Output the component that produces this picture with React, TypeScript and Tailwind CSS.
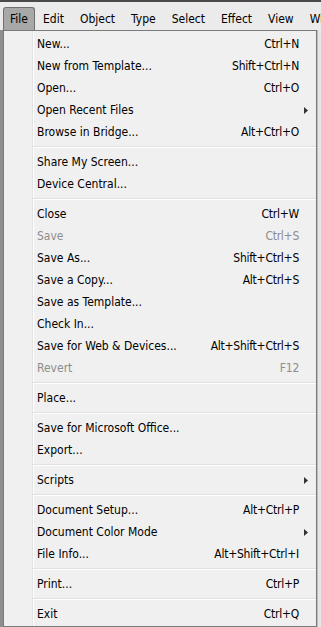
import React from "react";

type Item =
  | { kind: "item"; label: string; shortcut?: string; disabled?: boolean; submenu?: boolean }
  | { kind: "sep" };

const menuBar = ["File", "Edit", "Object", "Type", "Select", "Effect", "View", "Window"];

const items: Item[] = [
  { kind: "item", label: "New...", shortcut: "Ctrl+N" },
  { kind: "item", label: "New from Template...", shortcut: "Shift+Ctrl+N" },
  { kind: "item", label: "Open...", shortcut: "Ctrl+O" },
  { kind: "item", label: "Open Recent Files", submenu: true },
  { kind: "item", label: "Browse in Bridge...", shortcut: "Alt+Ctrl+O" },
  { kind: "sep" },
  { kind: "item", label: "Share My Screen..." },
  { kind: "item", label: "Device Central..." },
  { kind: "sep" },
  { kind: "item", label: "Close", shortcut: "Ctrl+W" },
  { kind: "item", label: "Save", shortcut: "Ctrl+S", disabled: true },
  { kind: "item", label: "Save As...", shortcut: "Shift+Ctrl+S" },
  { kind: "item", label: "Save a Copy...", shortcut: "Alt+Ctrl+S" },
  { kind: "item", label: "Save as Template..." },
  { kind: "item", label: "Check In..." },
  { kind: "item", label: "Save for Web & Devices...", shortcut: "Alt+Shift+Ctrl+S" },
  { kind: "item", label: "Revert", shortcut: "F12", disabled: true },
  { kind: "sep" },
  { kind: "item", label: "Place..." },
  { kind: "sep" },
  { kind: "item", label: "Save for Microsoft Office..." },
  { kind: "item", label: "Export..." },
  { kind: "sep" },
  { kind: "item", label: "Scripts", submenu: true },
  { kind: "sep" },
  { kind: "item", label: "Document Setup...", shortcut: "Alt+Ctrl+P" },
  { kind: "item", label: "Document Color Mode", submenu: true },
  { kind: "item", label: "File Info...", shortcut: "Alt+Shift+Ctrl+I" },
  { kind: "sep" },
  { kind: "item", label: "Print...", shortcut: "Ctrl+P" },
  { kind: "sep" },
  { kind: "item", label: "Exit", shortcut: "Ctrl+Q" },
];

const font = "font-['DejaVu_Sans_Condensed','DejaVu_Sans',sans-serif] text-[12px]";

export default function App() {
  return (
    <div className={`w-[321px] h-[627px] overflow-hidden bg-[#e9e9e9] text-black ${font}`}>
      {/* menu bar */}
      <div className="h-[30px] border-t-2 border-[#4a4a4a] bg-[#ebebeb] flex items-end pl-[3px] overflow-hidden whitespace-nowrap">
        {menuBar.map((m, i) => (
          <div
            key={m}
            className={
              i === 0
                ? "shrink-0 h-[23px] w-[32px] flex items-center justify-center rounded-t-[3px] border border-b-0 border-[#6f6f6f] bg-[#a8a8a8]"
                : "shrink-0 h-[23px] px-[8px] flex items-center"
            }
          >
            {m}
          </div>
        ))}
      </div>

      <div className="flex h-[597px]">
        {/* window behind the menu */}
        <div className="w-[3px] bg-[#8e8e8e]" />

        {/* dropdown */}
        <div className="w-[314px] border border-[#7a7a7a] pt-[2px] pb-px bg-[linear-gradient(to_right,#f0f0f0_28px,#e2e3e3_28px,#e2e3e3_29px,#ffffff_29px,#ffffff_30px,#f0f0f0_30px)]">
          {items.map((it, i) =>
            it.kind === "sep" ? (
              <div key={i} className="h-[8px] pl-[29px] flex flex-col justify-center">
                <div className="h-px bg-[#e0e0e0]" />
                <div className="h-px bg-white" />
              </div>
            ) : (
              <div
                key={i}
                className={`h-[22px] flex items-center pl-[33px] whitespace-nowrap ${
                  it.disabled ? "text-[#8d8d8d]" : "text-black"
                }`}
              >
                <span className="flex-1">{it.label}</span>
                {it.shortcut && <span className="tracking-[-0.25px]">{it.shortcut}</span>}
                <span className="w-[17px] flex items-center pl-[5px]">
                  {it.submenu && (
                    <svg width="4" height="7" viewBox="0 0 4 7">
                      <path d="M0 0 L4 3.5 L0 7 Z" fill="#333" />
                    </svg>
                  )}
                </span>
              </div>
            )
          )}
        </div>

        {/* right edge */}
        <div className="w-[4px] flex">
          <div className="w-px bg-[#bcbcbc]" />
          <div className="flex-1 bg-[#e6e6e6]" />
        </div>
      </div>
    </div>
  );
}
